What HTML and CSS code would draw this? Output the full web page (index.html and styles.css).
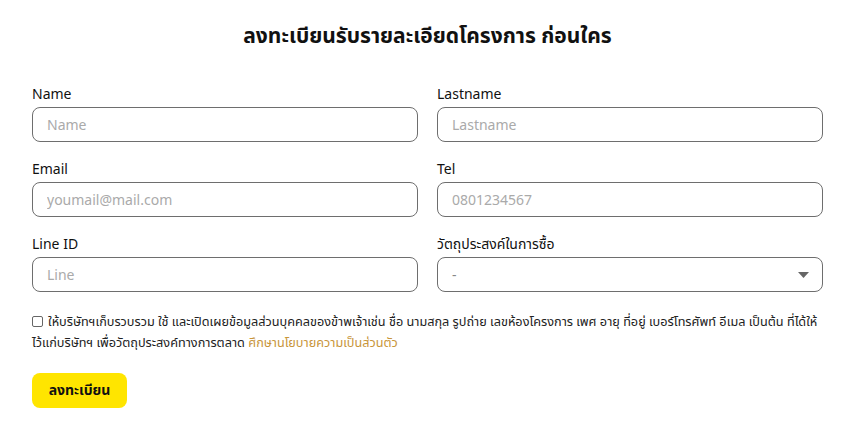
FILE: index.html
```html
<!DOCTYPE html>
<html lang="th">
<head>
<meta charset="utf-8">
<title>ลงทะเบียน</title>
<link rel="stylesheet" href="styles.css">
</head>
<body>
<main class="form-wrap">
  <h1 class="title">ลงทะเบียนรับรายละเอียดโครงการ ก่อนใคร</h1>
  <form class="form">
    <div class="grid">
      <div class="field">
        <label class="label">Name</label>
        <input class="input" type="text" placeholder="Name">
      </div>
      <div class="field">
        <label class="label">Lastname</label>
        <input class="input" type="text" placeholder="Lastname">
      </div>
      <div class="field">
        <label class="label">Email</label>
        <input class="input" type="text" placeholder="youmail@mail.com">
      </div>
      <div class="field">
        <label class="label">Tel</label>
        <input class="input" type="text" placeholder="0801234567">
      </div>
      <div class="field">
        <label class="label">Line ID</label>
        <input class="input" type="text" placeholder="Line">
      </div>
      <div class="field">
        <label class="label">วัตถุประสงค์ในการซื้อ</label>
        <div class="select">
          <span class="select-value">-</span>
          <svg class="caret" width="11" height="6" viewBox="0 0 11 6"><path d="M0 0h11L5.5 6z" fill="#666"/></svg>
        </div>
      </div>
    </div>
    <p class="consent"><span class="check"></span>ให้บริษัทฯเก็บรวบรวม ใช้ และเปิดเผยข้อมูลส่วนบุคคลของข้าพเจ้าเช่น ชื่อ นามสกุล รูปถ่าย เลขห้องโครงการ เพศ อายุ ที่อยู่ เบอร์โทรศัพท์ อีเมล เป็นต้น ที่ได้ให้ไว้แก่บริษัทฯ เพื่อวัตถุประสงค์ทางการตลาด <a class="link" href="#">ศึกษานโยบายความเป็นส่วนตัว</a></p>
    <button class="submit" type="button">ลงทะเบียน</button>
  </form>
</main>
</body>
</html>
```
FILE: styles.css
```css
* { box-sizing: border-box; }
body {
  margin: 0;
  background: #fff;
  color: #111;
  font-family: "Noto Sans", "Noto Sans Thai", "Noto Sans CJK SC", sans-serif;
}
.form-wrap {
  width: 791px;
  margin: 0 auto;
  padding-top: 20px;
}
.title {
  margin: 0;
  text-align: center;
  font-size: 21px;
  font-weight: 700;
  line-height: 30px;
}
.form { margin-top: 34px; }
.grid {
  display: grid;
  grid-template-columns: 386px 386px;
  column-gap: 19px;
  row-gap: 17px;
}
.field { display: flex; flex-direction: column; }
.label {
  font-size: 14px;
  line-height: 20px;
  margin-bottom: 3px;
  color: #111;
}
.input, .select {
  height: 35px;
  border: 1px solid #6e6e6e;
  border-radius: 8px;
  padding: 0 14px;
  font-size: 14px;
  font-family: inherit;
  color: #111;
  background: #fff;
  outline: none;
}
.input::placeholder { color: #aaa; }
.select {
  display: flex;
  align-items: center;
  justify-content: space-between;
  padding-right: 13px;
}
.select-value { color: #888; }
.consent {
  margin: 19px 0 0;
  font-size: 12.7px;
  line-height: 21px;
  color: #222;
}
.check {
  display: inline-block;
  vertical-align: -1px;
  width: 11px;
  height: 11px;
  margin-right: 5px;
  border: 1px solid #666;
  border-radius: 2px;
}
.link { color: #c8953a; text-decoration: none; }
.submit {
  display: block;
  margin-top: 20px;
  width: 95px;
  height: 35px;
  border: none;
  border-radius: 8px;
  background: #ffe500;
  font-family: inherit;
  font-size: 14px;
  font-weight: 700;
  color: #111;
  cursor: pointer;
}
```
